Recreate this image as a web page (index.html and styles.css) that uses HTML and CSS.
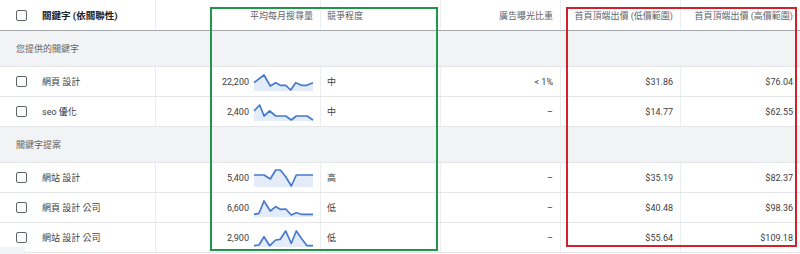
FILE: index.html
```html
<!DOCTYPE html>
<html lang="zh-Hant">
<head>
<meta charset="utf-8">
<link rel="stylesheet" href="styles.css">
</head>
<body>
<div class="table">
  <div class="row head">
    <div class="cell kw"><span class="cb"></span><span class="kw-title">關鍵字 (依關聯性)</span></div>
    <div class="cell num">平均每月搜尋量</div>
    <div class="cell left">競爭程度</div>
    <div class="cell num">廣告曝光比重</div>
    <div class="cell num">首頁頂端出價 (低價範圍)</div>
    <div class="cell num">首頁頂端出價 (高價範圍)</div>
  </div>

  <div class="section">您提供的關鍵字</div>

  <div class="row">
    <div class="cell kw"><span class="cb"></span><span>網頁 設計</span></div>
    <div class="cell num vol"><span>22,200</span>
      <svg class="spark" viewBox="0 0 59 18" width="59" height="18"><polygon class="area" points="0,9.7 10,2 16.3,13 21.7,9.7 26.3,12.3 31.7,12.3 36.7,17 41.7,9.7 47.3,12.3 53,12.3 59,9.7 59,18 0,18"/><polyline class="line" points="0,9.7 10,2 16.3,13 21.7,9.7 26.3,12.3 31.7,12.3 36.7,17 41.7,9.7 47.3,12.3 53,12.3 59,9.7"/></svg>
    </div>
    <div class="cell left">中</div>
    <div class="cell num">&lt; 1%</div>
    <div class="cell num">$31.86</div>
    <div class="cell num">$76.04</div>
  </div>

  <div class="row">
    <div class="cell kw"><span class="cb"></span><span>seo 優化</span></div>
    <div class="cell num vol"><span>2,400</span>
      <svg class="spark" viewBox="0 0 59 18" width="59" height="18"><polygon class="area" points="0,8 5.7,2 10,13 15.7,8 21.7,13 31.7,13 37.3,17 42.3,13 53,13 59,17 59,18 0,18"/><polyline class="line" points="0,8 5.7,2 10,13 15.7,8 21.7,13 31.7,13 37.3,17 42.3,13 53,13 59,17"/></svg>
    </div>
    <div class="cell left">中</div>
    <div class="cell num">–</div>
    <div class="cell num">$14.77</div>
    <div class="cell num">$62.55</div>
  </div>

  <div class="section">關鍵字提案</div>

  <div class="row">
    <div class="cell kw"><span class="cb"></span><span>網站 設計</span></div>
    <div class="cell num vol"><span>5,400</span>
      <svg class="spark" viewBox="0 0 59 18" width="59" height="18"><polygon class="area" points="0,6 10,6 16.3,10 21.7,1 26.3,1 31.7,7.7 37.3,17 42.3,6 59,6 59,18 0,18"/><polyline class="line" points="0,6 10,6 16.3,10 21.7,1 26.3,1 31.7,7.7 37.3,17 42.3,6 59,6"/></svg>
    </div>
    <div class="cell left">高</div>
    <div class="cell num">–</div>
    <div class="cell num">$35.19</div>
    <div class="cell num">$82.37</div>
  </div>

  <div class="row">
    <div class="cell kw"><span class="cb"></span><span>網頁 設計 公司</span></div>
    <div class="cell num vol"><span>6,600</span>
      <svg class="spark" viewBox="0 0 59 18" width="59" height="18"><polygon class="area" points="0,15.3 5,14.3 10,2 16.3,12 21.7,7.7 26.3,10.3 31.7,10 37.3,16 42.3,13.7 47.3,15.3 59,15.3 59,18 0,18"/><polyline class="line" points="0,15.3 5,14.3 10,2 16.3,12 21.7,7.7 26.3,10.3 31.7,10 37.3,16 42.3,13.7 47.3,15.3 59,15.3"/></svg>
    </div>
    <div class="cell left">低</div>
    <div class="cell num">–</div>
    <div class="cell num">$40.48</div>
    <div class="cell num">$98.36</div>
  </div>

  <div class="row">
    <div class="cell kw"><span class="cb"></span><span>網站 設計 公司</span></div>
    <div class="cell num vol"><span>2,900</span>
      <svg class="spark" viewBox="0 0 59 18" width="59" height="18"><polygon class="area" points="0,16.7 5,16 10,7.7 15.7,16.7 21.7,11 26.3,10.3 31.7,2 37.3,14.3 42.3,2 47.3,9.3 53,16.7 59,16.7 59,18 0,18"/><polyline class="line" points="0,16.7 5,16 10,7.7 15.7,16.7 21.7,11 26.3,10.3 31.7,2 37.3,14.3 42.3,2 47.3,9.3 53,16.7 59,16.7"/></svg>
    </div>
    <div class="cell left">低</div>
    <div class="cell num">–</div>
    <div class="cell num">$55.64</div>
    <div class="cell num">$109.18</div>
  </div>

  <div class="mark mark-green"></div>
  <div class="mark mark-red"></div>
  <div class="scroll-stub"></div>
</div>
</body>
</html>
```

FILE: styles.css
```css
* { box-sizing: border-box; }
html, body { margin: 0; padding: 0; background: #fff; }
body {
  font-family: Roboto, "Noto Sans CJK TC", sans-serif;
  font-size: 9px;
  color: #3c4043;
  width: 800px;
  height: 254px;
  overflow: hidden;
}
.table { position: relative; width: 800px; }
.row {
  display: grid;
  grid-template-columns: 155px 165px 120px 120px 120px 120px;
  height: 30px;
  border-bottom: 1px solid #e3e5e8;
}
.row.head {
  height: 31px;
  border-bottom: 1.5px solid #a5a9ae;
  color: #5f6368;
}
.cell {
  display: flex;
  align-items: center;
  border-left: 1px solid #ebedef;
  white-space: nowrap;
}
.cell.kw { border-left: none; padding-left: 16px; gap: 15px; color: #3c4043; }
.cell.num { justify-content: flex-end; padding-right: 7px; }
.cell.left { padding-left: 6px; }
.cell.vol { gap: 5px; }
.kw-title { font-weight: bold; color: #202124; font-size: 9.5px; }
.cb {
  width: 11px;
  height: 11px;
  border: 1.6px solid #5f6368;
  border-radius: 2px;
  flex: none;
}
.section {
  height: 36px;
  background: #f1f3f4;
  border-bottom: 1px solid #e3e5e8;
  display: flex;
  align-items: center;
  padding-left: 16px;
  color: #5f6368;
}
.spark { display: block; flex: none; overflow: visible; }
.spark .area { fill: #e4ecfa; }
.spark .line { fill: none; stroke: #4679d0; stroke-width: 1.7; stroke-linejoin: round; }
.mark { position: absolute; pointer-events: none; }
.mark-green { left: 210px; top: 7px; width: 228px; height: 244px; border: 2px solid #23954a; }
.mark-red { left: 566px; top: 7px; width: 231px; height: 240px; border: 2px solid #d3202b; }
.scroll-stub { position: absolute; left: 0; top: 247px; width: 25px; height: 7px; background: #f1f3f4; }
```
